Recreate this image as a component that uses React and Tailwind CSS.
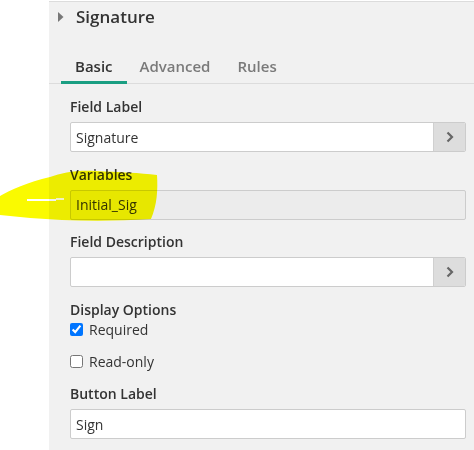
import { ChevronRight } from 'lucide-react'

function Chevron() {
  return (
    <svg width="8" height="12" viewBox="0 0 8 12" className="block">
      <polyline points="1.5,1.5 6,6 1.5,10.5" fill="none" stroke="#666" strokeWidth="2.2" />
    </svg>
  )
}

function FieldGroup({ label, value, button = false, disabled = false }) {
  return (
    <div className="flex flex-col">
      <label className="text-[14px] leading-[20px] font-semibold text-[#333]">{label}</label>
      <div
        className={`mt-[5px] flex h-[30px] border border-[#ccc] rounded-[2px] overflow-hidden ${
          disabled ? 'bg-[#ececec]' : 'bg-white'
        }`}
      >
        <div className="flex-1 flex items-center pl-[5px] text-[14px] text-[#333]">{value}</div>
        {button && (
          <div className="w-[32px] bg-[#dddddd] border-l border-[#d0d0d0] flex items-center justify-center">
            <Chevron />
          </div>
        )}
      </div>
    </div>
  )
}

function Check({ label, checked }) {
  return (
    <label className="flex items-center gap-[6px] h-[20px] text-[14px] text-[#333]">
      <input type="checkbox" defaultChecked={checked} className="w-[13px] h-[13px] m-0" />
      <span>{label}</span>
    </label>
  )
}

export default function App() {
  return (
    <div className="relative w-[474px] h-[450px] flex bg-white font-['Open_Sans',sans-serif] overflow-hidden">
      <div className="w-[49px] shrink-0" />
      <div className="flex-1 flex flex-col pt-px">
        <div className="flex-1 bg-[#f1f1f1] border-t border-[#dcdcdc]">
          {/* Header */}
          <div className="mt-[3px] flex items-center h-[24px] pl-[9px]">
            <svg width="6" height="10" viewBox="0 0 6 10" className="block">
              <polygon points="0,0 5.5,5 0,10" fill="#777" />
            </svg>
            <span className="ml-[12px] text-[17px] leading-[24px] font-semibold text-[#333]">Signature</span>
          </div>

          {/* Tabs */}
          <div className="mt-[27px] flex pl-[12px] border-b border-[#dcdcdc]">
            <div className="px-[14px] pb-[5px] border-b-[3px] border-[#1a9e82] text-[15px] leading-[20px] font-semibold text-[#333] -mb-px">
              Basic
            </div>
            <div className="px-[13px] pb-[5px] border-b-[3px] border-transparent text-[15px] leading-[20px] font-semibold text-[#7a7a7a] -mb-px">
              Advanced
            </div>
            <div className="px-[14px] pb-[5px] border-b-[3px] border-transparent text-[15px] leading-[20px] font-semibold text-[#7a7a7a] -mb-px">
              Rules
            </div>
          </div>

          {/* Form */}
          <div className="pt-[13px] pl-[21px] pr-[8px] flex flex-col gap-[12.5px]">
            <FieldGroup label="Field Label" value="Signature" button />
            <FieldGroup label="Variables" value="Initial_Sig" disabled />
            <FieldGroup label="Field Description" value="" button />
            <div className="flex flex-col">
              <span className="text-[14px] leading-[20px] font-semibold text-[#333]">Display Options</span>
              <Check label="Required" checked />
              <div className="mt-[12px]">
                <Check label="Read-only" checked={false} />
              </div>
            </div>
            <FieldGroup label="Button Label" value="Sign" />
          </div>
        </div>
      </div>

      {/* Highlighter mark */}
      <svg
        width="474"
        height="450"
        viewBox="0 0 474 450"
        className="absolute top-0 left-0 pointer-events-none mix-blend-multiply"
      >
        <path
          d="M0,196 C10,190 28,182 50,177 C62,173 75,170 95,171 C120,172 140,173 157,175 C158,190 157,205 151,219 C120,221 90,221 62,220 C40,219 20,217 0,215 Z"
          fill="#fafa00"
        />
        <line x1="27" y1="200" x2="56" y2="200" stroke="#ffffff" strokeWidth="2" />
        <line x1="56" y1="199" x2="64" y2="199" stroke="#ffffd0" strokeWidth="2" />
      </svg>
    </div>
  )
}
